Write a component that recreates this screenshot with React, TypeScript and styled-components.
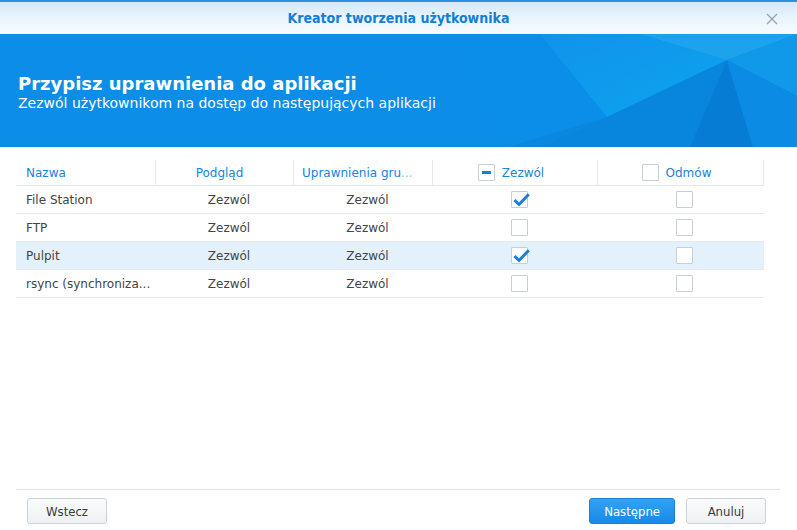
import styled, { createGlobalStyle } from 'styled-components';

const GlobalStyle = createGlobalStyle`
  html, body {
    margin: 0;
    padding: 0;
  }
  body {
    font-family: "DejaVu Sans", Verdana, sans-serif;
    background: #ffffff;
  }
`;

type AppRow = {
  name: string;
  preview: string;
  group: string;
  allow: boolean;
  deny: boolean;
  selected?: boolean;
};

const apps: AppRow[] = [
  { name: 'File Station', preview: 'Zezwól', group: 'Zezwól', allow: true, deny: false },
  { name: 'FTP', preview: 'Zezwól', group: 'Zezwól', allow: false, deny: false },
  { name: 'Pulpit', preview: 'Zezwól', group: 'Zezwól', allow: true, deny: false, selected: true },
  { name: 'rsync (synchroniza...', preview: 'Zezwól', group: 'Zezwól', allow: false, deny: false },
];

const CheckBox = ({ checked, partial }: { checked?: boolean; partial?: boolean }) => (
  <Box>
    {checked && (
      <svg className="tick" width="20" height="16" viewBox="0 0 20 16">
        <path d="M2.5 8.2 L7 12.5 L16.8 2.2" fill="none" stroke="#1b7fd8" strokeWidth="3" strokeLinejoin="miter" />
      </svg>
    )}
    {partial && <span className="bar" />}
  </Box>
);

const App = () => {
  return (
    <Dialog>
      <GlobalStyle />
      <TitleBar>
        <span />
        <Title>Kreator tworzenia użytkownika</Title>
        <Close aria-label="close">
          <svg width="12" height="12" viewBox="0 0 12 12">
            <path d="M1 1 L11 11 M11 1 L1 11" stroke="#9aa4ad" strokeWidth="1.4" />
          </svg>
        </Close>
      </TitleBar>

      <Banner>
        <svg className="facets" viewBox="0 0 797 113" preserveAspectRatio="none">
          <defs>
            <linearGradient id="lite" x1="0" y1="0" x2="1" y2="1">
              <stop offset="0" stopColor="#1193ea" />
              <stop offset="1" stopColor="#0ca4f0" />
            </linearGradient>
          </defs>
          <polygon points="453,0 540,0 607,83 507,113" fill="#0b8ee8" />
          <polygon points="540,0 640,0 727,26 607,83" fill="url(#lite)" />
          <polygon points="640,0 797,0 727,26" fill="#1da3ee" />
          <polygon points="797,0 727,26 797,62" fill="#1199e9" />
          <polygon points="607,83 727,26 690,113 540,113" fill="#0886de" />
          <polygon points="727,26 753,113 690,113" fill="#077cd5" />
          <polygon points="727,26 797,62 797,113 753,113" fill="#0b8be3" />
          <polygon points="507,113 607,83 540,113" fill="#0a88e0" />
        </svg>
        <Heading>Przypisz uprawnienia do aplikacji</Heading>
        <Subheading>Zezwól użytkownikom na dostęp do następujących aplikacji</Subheading>
      </Banner>

      <Content>
        <Table>
          <HeadRow>
            <HeadCell $align="left" $pad="0 0 0 10px">Nazwa</HeadCell>
            <HeadCell $align="center" $pad="0 10px 0 0">Podgląd</HeadCell>
            <HeadCell $align="left" $pad="0 0 0 8px">
              <span>
                Uprawnienia gru<Dim>...</Dim>
              </span>
            </HeadCell>
            <HeadCell $align="center" $pad="0 8px 0 0">
              <CheckBox partial />
              <span>Zezwól</span>
            </HeadCell>
            <HeadCell $align="center" $pad="0 8px 0 0">
              <CheckBox />
              <span>Odmów</span>
            </HeadCell>
          </HeadRow>
          {apps.map((app) => (
            <Row key={app.name} $selected={app.selected}>
              <Cell $align="left" $pad="0 0 0 10px">{app.name}</Cell>
              <Cell $align="center" $pad="0 0 0 8px">{app.preview}</Cell>
              <Cell $align="center" $pad="0 0 0 8px">{app.group}</Cell>
              <Cell $align="center" $pad="0 0 0 7px">
                <CheckBox checked={app.allow} />
              </Cell>
              <Cell $align="center" $pad="0 0 0 7px">
                <CheckBox checked={app.deny} />
              </Cell>
            </Row>
          ))}
        </Table>
      </Content>

      <Footer>
        <Button>Wstecz</Button>
        <Spacer />
        <Button $primary>Następne</Button>
        <Button>Anuluj</Button>
      </Footer>
    </Dialog>
  );
};

const Dialog = styled.div`
  width: 797px;
  height: 530px;
  display: flex;
  flex-direction: column;
  background: #ffffff;
  overflow: hidden;
`;

const TitleBar = styled.div`
  box-sizing: border-box;
  height: 34px;
  border-top: 2px solid #2f8fe0;
  background: linear-gradient(to bottom, #d3e8fa 0%, #e8f3fc 45%, #f8fbfe 100%);
  display: grid;
  grid-template-columns: 1fr auto 1fr;
  align-items: center;
`;

const Title = styled.div`
  font-family: "DejaVu Sans Condensed", "DejaVu Sans", sans-serif;
  font-stretch: condensed;
  font-weight: bold;
  font-size: 14px;
  color: #0f7fd6;
  padding-bottom: 1px;
`;

const Close = styled.div`
  justify-self: end;
  display: flex;
  margin-right: 19px;
  margin-top: 1px;
`;

const Banner = styled.div`
  position: relative;
  box-sizing: border-box;
  height: 113px;
  padding: 40px 0 0 18px;
  background: #0b8de8;
  color: #ffffff;
  overflow: hidden;

  & .facets {
    position: absolute;
    inset: 0;
    width: 100%;
    height: 100%;
  }
`;

const Heading = styled.div`
  position: relative;
  font-size: 18px;
  font-weight: bold;
  line-height: 20px;
`;

const Subheading = styled.div`
  position: relative;
  font-size: 14px;
  line-height: 18px;
`;

const Content = styled.div`
  flex: 1;
  padding: 13px 0 0 16px;
`;

const Table = styled.div`
  width: 748px;
`;

const columns = '140px 138px 139px 165px 166px';

const HeadRow = styled.div`
  display: grid;
  grid-template-columns: ${columns};
  box-sizing: border-box;
  height: 26px;
  border-bottom: 1px solid #e3e8ed;
`;

const HeadCell = styled.div<{ $align: 'left' | 'center'; $pad: string }>`
  box-sizing: border-box;
  display: flex;
  align-items: center;
  justify-content: ${(p) => (p.$align === 'center' ? 'center' : 'flex-start')};
  gap: 7px;
  padding: ${(p) => p.$pad};
  border-right: 1px solid #e6e9ec;
  font-size: 12px;
  color: #1684dc;
  white-space: nowrap;
  overflow: hidden;
`;

const Dim = styled.span`
  color: #9fb8cc;
`;

const Row = styled.div<{ $selected?: boolean }>`
  display: grid;
  grid-template-columns: ${columns};
  box-sizing: border-box;
  height: 28px;
  border-bottom: 1px solid #e6eaee;
  background: ${(p) => (p.$selected ? '#e3f1fc' : 'transparent')};
`;

const Cell = styled.div<{ $align: 'left' | 'center'; $pad: string }>`
  box-sizing: border-box;
  display: flex;
  align-items: center;
  justify-content: ${(p) => (p.$align === 'center' ? 'center' : 'flex-start')};
  padding: ${(p) => p.$pad};
  font-size: 12px;
  color: #444444;
  white-space: nowrap;
  overflow: hidden;
`;

const Box = styled.span`
  position: relative;
  box-sizing: border-box;
  display: inline-block;
  width: 17px;
  height: 17px;
  border: 1px solid #c9ced3;
  border-radius: 1px;
  background: #ffffff;
  flex-shrink: 0;

  & .tick {
    position: absolute;
    left: 0px;
    top: 0px;
  }
  & .bar {
    position: absolute;
    left: 3px;
    top: 6px;
    width: 9px;
    height: 3px;
    background: #0a85e0;
  }
`;

const Footer = styled.div`
  box-sizing: border-box;
  height: 41px;
  margin: 0 17px 0 16px;
  padding: 8px 14px 6px 11px;
  border-top: 1px solid #dfe3e7;
  display: flex;
  align-items: flex-start;
  gap: 11px;
`;

const Spacer = styled.div`
  flex: 1;
`;

const Button = styled.button<{ $primary?: boolean }>`
  box-sizing: border-box;
  height: 26px;
  min-width: 80px;
  padding: 0 14px;
  border-radius: 3px;
  font-family: "DejaVu Sans Condensed", "DejaVu Sans", sans-serif;
  font-stretch: condensed;
  font-size: 13px;
  cursor: pointer;
  border: 1px solid ${(p) => (p.$primary ? '#1a80d4' : '#cbd2d8')};
  color: ${(p) => (p.$primary ? '#ffffff' : '#3b3b3b')};
  background: ${(p) =>
    p.$primary
      ? 'linear-gradient(to bottom, #35a2f2 0%, #168ae6 100%)'
      : 'linear-gradient(to bottom, #fafbfc 0%, #eef1f4 100%)'};
`;

export default App;
